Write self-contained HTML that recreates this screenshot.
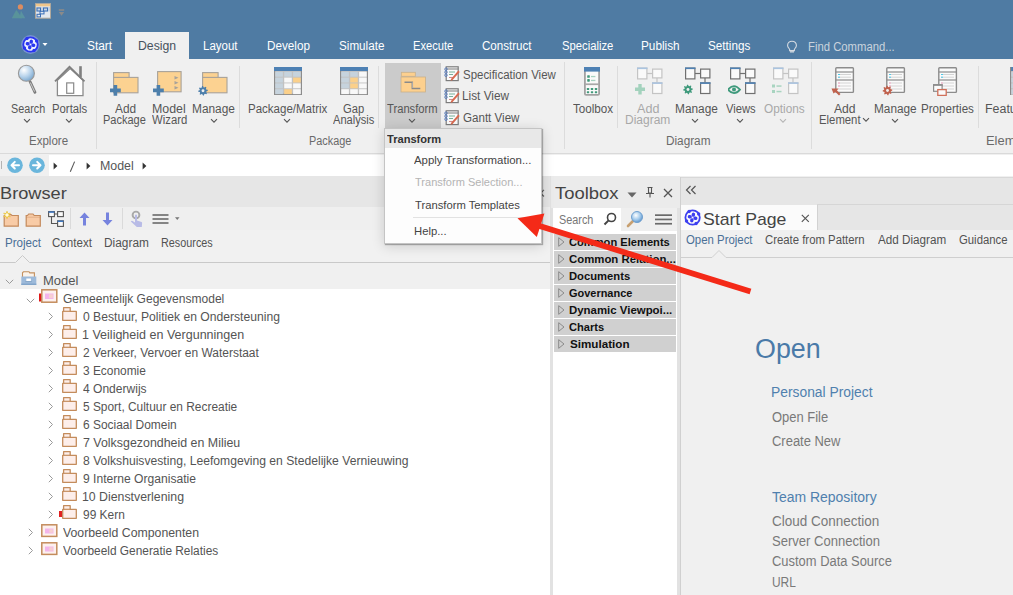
<!DOCTYPE html>
<html><head><meta charset="utf-8"><style>
html,body{margin:0;padding:0;}
body{width:1013px;height:595px;overflow:hidden;position:relative;background:#f0f0f0;font-family:"Liberation Sans",sans-serif;}
.t{position:absolute;white-space:nowrap;transform-origin:0 0;}
svg{display:block}
</style></head><body>
<div style="position:absolute;left:0px;top:0px;width:1013px;height:59px;background:#4f7ba3;"></div>
<svg style="position:absolute;left:11px;top:3px;" width="16" height="17" viewBox="0 0 16 17"><circle cx="9.4" cy="3.9" r="2.6" fill="#dc8c60"/><path d="M8.5 15.3 L9.8 8.4 Q10 7.9 10.4 8.4 L14.3 15.3 Z" fill="#5d9aa0" opacity="0.8"/><path d="M0.8 15.3 L4.9 7.6 Q5.3 7 5.8 7.6 L11.3 15.3 Z" fill="#5a9699" opacity="0.9"/></svg>
<svg style="position:absolute;left:35px;top:3px;" width="16" height="16" viewBox="0 0 16 16"><rect x="0.5" y="0.6" width="15" height="14.6" fill="#e2e8ef" stroke="#b0a89c" stroke-width="1"/><rect x="1" y="1" width="14" height="2.4" fill="#eec58a"/><rect x="1" y="4" width="14" height="4.5" fill="#c5d3e2"/><g fill="none" stroke="#3a6fb6" stroke-width="1"><rect x="2" y="5" width="3.5" height="3"/><rect x="8.5" y="5" width="4" height="3"/><rect x="5" y="8.3" width="4" height="2.6"/><rect x="2" y="11.3" width="3.5" height="2.6"/></g></svg>
<svg style="position:absolute;left:58px;top:8px;" width="7" height="9" viewBox="0 0 7 9"><rect x="0.8" y="1.2" width="5.4" height="1.6" fill="#8a8a8a"/><path d="M0.8 4 L6.2 4 L3.5 7.8 Z" fill="#8a8a8a"/></svg>
<svg style="position:absolute;left:21px;top:35px;" width="19" height="19" viewBox="0 0 19 19"><circle cx="9.5" cy="9.5" r="9.4" fill="#a0a8ff" opacity="0.5"/><circle cx="9.5" cy="9.5" r="7" fill="#eef0ff"/><circle cx="9.5" cy="9.5" r="7.2" fill="none" stroke="#2a36f0" stroke-width="1.8"/><circle cx="15.56" cy="6.00" r="1.7" fill="#2a36f0"/><circle cx="13.00" cy="15.56" r="1.7" fill="#2a36f0"/><circle cx="3.44" cy="13.00" r="1.7" fill="#2a36f0"/><circle cx="6.00" cy="3.44" r="1.7" fill="#2a36f0"/><ellipse cx="10.25" cy="6.70" rx="2.1" ry="1.75" transform="rotate(-75 10.25 6.70)" fill="#2a36f0"/><ellipse cx="12.30" cy="10.25" rx="2.1" ry="1.75" transform="rotate(15 12.30 10.25)" fill="#2a36f0"/><ellipse cx="8.75" cy="12.30" rx="2.1" ry="1.75" transform="rotate(105 8.75 12.30)" fill="#2a36f0"/><ellipse cx="6.70" cy="8.75" rx="2.1" ry="1.75" transform="rotate(195 6.70 8.75)" fill="#2a36f0"/></svg>
<svg style="position:absolute;left:42px;top:42px;" width="6" height="5" viewBox="0 0 6 5"><path d="M0.5 1 L5.5 1 L3 4 Z" fill="#ffffff"/></svg>
<div style="position:absolute;left:125px;top:32px;width:64px;height:28px;background:#f0f0f0;"></div>
<div class="t" style="left:86.5px;top:39.84px;font-size:12px;line-height:12px;color:#ffffff;transform:scaleX(0.9899);">Start</div>
<div class="t" style="left:138.0px;top:39.84px;font-size:12px;line-height:12px;color:#47525e;transform:scaleX(1.0210);">Design</div>
<div class="t" style="left:203.0px;top:39.84px;font-size:12px;line-height:12px;color:#ffffff;transform:scaleX(0.9571);">Layout</div>
<div class="t" style="left:267.0px;top:39.84px;font-size:12px;line-height:12px;color:#ffffff;transform:scaleX(0.9765);">Develop</div>
<div class="t" style="left:339.0px;top:39.84px;font-size:12px;line-height:12px;color:#ffffff;transform:scaleX(0.9727);">Simulate</div>
<div class="t" style="left:413.1px;top:39.84px;font-size:12px;line-height:12px;color:#ffffff;transform:scaleX(0.9286);">Execute</div>
<div class="t" style="left:482.0px;top:39.84px;font-size:12px;line-height:12px;color:#ffffff;transform:scaleX(0.9655);">Construct</div>
<div class="t" style="left:561.5px;top:39.84px;font-size:12px;line-height:12px;color:#ffffff;transform:scaleX(0.9395);">Specialize</div>
<div class="t" style="left:640.7px;top:39.84px;font-size:12px;line-height:12px;color:#ffffff;transform:scaleX(0.9801);">Publish</div>
<div class="t" style="left:708.0px;top:39.84px;font-size:12px;line-height:12px;color:#ffffff;transform:scaleX(0.9765);">Settings</div>
<svg style="position:absolute;left:786px;top:40px;" width="12" height="13" viewBox="0 0 12 13"><path d="M6 1.2 C3.3 1.2 1.6 3.2 1.6 5.4 C1.6 7.2 2.9 8.2 3.6 9.2 L3.6 10.6 L8.4 10.6 L8.4 9.2 C9.1 8.2 10.4 7.2 10.4 5.4 C10.4 3.2 8.7 1.2 6 1.2 Z" fill="none" stroke="#d5dbe2" stroke-width="1.1"/><rect x="4" y="11.2" width="4" height="1.3" fill="#d5dbe2"/></svg>
<div class="t" style="left:807.8px;top:40.84px;font-size:12px;line-height:12px;color:#c9d3dd;transform:scaleX(0.9422);">Find Command...</div>
<div style="position:absolute;left:0px;top:153px;width:1013px;height:1px;background:#dadada;"></div>
<div style="position:absolute;left:96px;top:62px;width:1px;height:87px;background:#dcdcdc;"></div>
<div style="position:absolute;left:239px;top:66px;width:1px;height:62px;background:#dcdcdc;"></div>
<div style="position:absolute;left:378px;top:66px;width:1px;height:62px;background:#dcdcdc;"></div>
<div style="position:absolute;left:564px;top:62px;width:1px;height:87px;background:#dcdcdc;"></div>
<div style="position:absolute;left:617px;top:66px;width:1px;height:62px;background:#dcdcdc;"></div>
<div style="position:absolute;left:811px;top:62px;width:1px;height:87px;background:#dcdcdc;"></div>
<div style="position:absolute;left:978px;top:66px;width:1px;height:62px;background:#dcdcdc;"></div>
<svg style="position:absolute;left:12px;top:63px;" width="28" height="34" viewBox="0 0 28 34"><defs><radialGradient id="lg" cx="0.35" cy="0.3" r="0.8"><stop offset="0" stop-color="#ffffff"/><stop offset="0.5" stop-color="#b9d4ec"/><stop offset="1" stop-color="#6f9fc9"/></radialGradient></defs>
<line x1="18" y1="18.5" x2="23" y2="29.3" stroke="#7a7a7a" stroke-width="2.8" stroke-linecap="round"/><line x1="18.3" y1="19.5" x2="22.6" y2="28.6" stroke="#d8d8d8" stroke-width="0.9"/>
<circle cx="14.4" cy="10.3" r="8" fill="url(#lg)" stroke="#999" stroke-width="1.1"/></svg>
<svg style="position:absolute;left:54px;top:65px;" width="33" height="33" viewBox="0 0 33 33"><rect x="25.2" y="1.2" width="2.6" height="11" fill="#7f7f7f"/><path d="M3.4 15.2 L3.4 30.6 L29 30.6 L29 15.2 L16.2 3.4 Z" fill="#ffffff" stroke="#8a8a8a" stroke-width="1.3"/><path d="M1 16.4 L15.5 1.8 L30.5 16.4" fill="none" stroke="#808080" stroke-width="1.8"/><rect x="12.7" y="17.9" width="7" height="10.4" fill="#ffffff" stroke="#8a8a8a" stroke-width="1.2"/></svg>
<div class="t" style="left:11.1px;top:102.84px;font-size:12px;line-height:12px;color:#565656;transform:scaleX(0.8980);">Search</div>
<div class="t" style="left:52.1px;top:102.84px;font-size:12px;line-height:12px;color:#565656;transform:scaleX(0.9444);">Portals</div>
<svg style="position:absolute;left:23px;top:118px;" width="8" height="6" viewBox="0 0 8 6"><path d="M1 1.2 L4 4.2 L7 1.2" fill="none" stroke="#555" stroke-width="1.1"/></svg>
<svg style="position:absolute;left:65px;top:118px;" width="8" height="6" viewBox="0 0 8 6"><path d="M1 1.2 L4 4.2 L7 1.2" fill="none" stroke="#555" stroke-width="1.1"/></svg>
<div class="t" style="left:29.3px;top:134.84px;font-size:12px;line-height:12px;color:#6a6a6a;transform:scaleX(0.9605);">Explore</div>
<svg style="position:absolute;left:113px;top:71.5px;" width="26" height="22" viewBox="0 0 26 22"><rect x="0.6" y="0.6" width="15.5" height="5" fill="#fcd291" stroke="#a8a29a" stroke-width="1.1"/><rect x="0.6" y="5.4" width="24.4" height="15.4" fill="#fcd291" stroke="#a8a29a" stroke-width="1.1"/></svg>
<svg style="position:absolute;left:110px;top:85px;" width="11" height="11" viewBox="0 0 11 11"><path d="M3.6 0 H7.2 V3.6 H10.8 V7.2 H7.2 V10.8 H3.6 V7.2 H0 V3.6 H3.6 Z" fill="#4d7fab"/></svg>
<svg style="position:absolute;left:157px;top:71px;" width="25" height="22" viewBox="0 0 25 22"><rect x="0.6" y="0.6" width="23.5" height="20.2" fill="#fcd291" stroke="#a8a29a" stroke-width="1.1"/><path d="M17.5 5 L21.5 6.8 L17.5 8.6 Z M17.5 10 L21.5 11.8 L17.5 13.6 Z M17.5 15 L21.5 16.8 L17.5 18.6 Z" fill="#a8a29a"/></svg>
<svg style="position:absolute;left:153px;top:85px;" width="11" height="11" viewBox="0 0 11 11"><path d="M3.6 0 H7.2 V3.6 H10.8 V7.2 H7.2 V10.8 H3.6 V7.2 H0 V3.6 H3.6 Z" fill="#4d7fab"/></svg>
<svg style="position:absolute;left:202px;top:71.5px;" width="26" height="22" viewBox="0 0 26 22"><rect x="0.6" y="0.6" width="15.5" height="5" fill="#fcd291" stroke="#a8a29a" stroke-width="1.1"/><rect x="0.6" y="5.4" width="24.4" height="15.4" fill="#fcd291" stroke="#a8a29a" stroke-width="1.1"/></svg>
<svg style="position:absolute;left:198px;top:85px;" width="11" height="11" viewBox="0 0 11 11"><polygon points="9.71,4.86 9.80,5.80 8.39,6.47 8.19,7.12 8.99,8.47 8.39,9.19 6.92,8.67 6.32,8.99 5.94,10.51 5.00,10.60 4.33,9.19 3.68,8.99 2.33,9.79 1.61,9.19 2.13,7.72 1.81,7.12 0.29,6.74 0.20,5.80 1.61,5.13 1.81,4.48 1.01,3.13 1.61,2.41 3.08,2.93 3.68,2.61 4.06,1.09 5.00,1.00 5.67,2.41 6.32,2.61 7.67,1.81 8.39,2.41 7.87,3.88 8.19,4.48" fill="#4d7fab"/><circle cx="5" cy="5.8" r="2.98" fill="#4d7fab"/><circle cx="5" cy="5.8" r="1.44" fill="#f0f0f0"/></svg>
<div class="t" style="left:114.5px;top:102.84px;font-size:12px;line-height:12px;color:#565656;transform:scaleX(0.9880);">Add</div>
<div class="t" style="left:103.4px;top:114.34px;font-size:12px;line-height:12px;color:#565656;transform:scaleX(0.9171);">Package</div>
<div class="t" style="left:152.3px;top:102.84px;font-size:12px;line-height:12px;color:#565656;transform:scaleX(1.0323);">Model</div>
<div class="t" style="left:151.7px;top:114.34px;font-size:12px;line-height:12px;color:#565656;transform:scaleX(0.9442);">Wizard</div>
<div class="t" style="left:192.2px;top:102.84px;font-size:12px;line-height:12px;color:#565656;transform:scaleX(0.9905);">Manage</div>
<svg style="position:absolute;left:210px;top:118px;" width="8" height="6" viewBox="0 0 8 6"><path d="M1 1.2 L4 4.2 L7 1.2" fill="none" stroke="#555" stroke-width="1.1"/></svg>
<svg style="position:absolute;left:274px;top:67.3px;" width="28" height="28" viewBox="0 0 28 28"><rect x="0" y="0" width="28" height="28" fill="#c2c2c2"/><rect x="0.6" y="0.6" width="26.8" height="26.8" fill="none" stroke="#8c8c8c" stroke-width="1.2"/><rect x="0" y="0" width="28" height="4" fill="#4e81b4"/><rect x="1.3" y="4.8" width="7.6" height="4.9" fill="#c6d3dd"/><rect x="10.2" y="4.8" width="7.6" height="4.9" fill="#c6d3dd"/><rect x="19.1" y="4.8" width="7.6" height="4.9" fill="#c6d3dd"/><rect x="1.3" y="10.6" width="7.6" height="4.9" fill="#c6d3dd"/><rect x="10.2" y="10.6" width="7.6" height="4.9" fill="#f8f8f8"/><rect x="19.1" y="10.6" width="7.6" height="4.9" fill="#fbd08a"/><rect x="1.3" y="16.4" width="7.6" height="4.9" fill="#c6d3dd"/><rect x="10.2" y="16.4" width="7.6" height="4.9" fill="#f8f8f8"/><rect x="19.1" y="16.4" width="7.6" height="4.9" fill="#f8f8f8"/><rect x="1.3" y="22.2" width="7.6" height="4.9" fill="#c6d3dd"/><rect x="10.2" y="22.2" width="7.6" height="4.9" fill="#fbd08a"/><rect x="19.1" y="22.2" width="7.6" height="4.9" fill="#f8f8f8"/></svg>
<svg style="position:absolute;left:339.5px;top:67.3px;" width="28" height="28" viewBox="0 0 28 28"><rect x="0" y="0" width="28" height="28" fill="#c2c2c2"/><rect x="0.6" y="0.6" width="26.8" height="26.8" fill="none" stroke="#8c8c8c" stroke-width="1.2"/><rect x="0" y="0" width="28" height="4" fill="#4e81b4"/><rect x="1.3" y="4.8" width="7.6" height="4.9" fill="#c6d3dd"/><rect x="10.2" y="4.8" width="7.6" height="4.9" fill="#c6d3dd"/><rect x="19.1" y="4.8" width="7.6" height="4.9" fill="#f8f8f8"/><rect x="1.3" y="10.6" width="7.6" height="4.9" fill="#c6d3dd"/><rect x="10.2" y="10.6" width="7.6" height="4.9" fill="#fbd08a"/><rect x="19.1" y="10.6" width="7.6" height="4.9" fill="#f8f8f8"/><rect x="1.3" y="16.4" width="7.6" height="4.9" fill="#c6d3dd"/><rect x="10.2" y="16.4" width="7.6" height="4.9" fill="#fbd08a"/><rect x="19.1" y="16.4" width="7.6" height="4.9" fill="#f8f8f8"/><rect x="1.3" y="22.2" width="7.6" height="4.9" fill="#f8f8f8"/><rect x="10.2" y="22.2" width="7.6" height="4.9" fill="#f8f8f8"/><rect x="19.1" y="22.2" width="7.6" height="4.9" fill="#f8f8f8"/></svg>
<div class="t" style="left:247.8px;top:102.84px;font-size:12px;line-height:12px;color:#565656;transform:scaleX(0.9595);">Package/Matrix</div>
<svg style="position:absolute;left:283px;top:118px;" width="8" height="6" viewBox="0 0 8 6"><path d="M1 1.2 L4 4.2 L7 1.2" fill="none" stroke="#555" stroke-width="1.1"/></svg>
<div class="t" style="left:343.0px;top:102.84px;font-size:12px;line-height:12px;color:#565656;transform:scaleX(0.9333);">Gap</div>
<div class="t" style="left:333.0px;top:114.34px;font-size:12px;line-height:12px;color:#565656;transform:scaleX(0.9266);">Analysis</div>
<div class="t" style="left:309.1px;top:134.84px;font-size:12px;line-height:12px;color:#6a6a6a;transform:scaleX(0.9061);">Package</div>
<div style="position:absolute;left:385px;top:63px;width:56px;height:65px;background:#cbcbcb;"></div>
<svg style="position:absolute;left:400px;top:71px;" width="27" height="22" viewBox="0 0 27 22"><rect x="1.3" y="1.3" width="14" height="4" fill="#fdd08e" stroke="#c8b08a" stroke-width="0.8"/><rect x="1" y="6" width="24.5" height="15" fill="#fdd08e" stroke="#c8b08a" stroke-width="0.8"/><path d="M4.5 11.3 H12.3 V17.6 H20.3" fill="none" stroke="#8a8a8a" stroke-width="1.5"/><path d="M12.3 11.3 V17" stroke="#ffffff" stroke-width="0.6" opacity="0.6"/></svg>
<div class="t" style="left:387.3px;top:102.84px;font-size:12px;line-height:12px;color:#565656;transform:scaleX(0.9333);">Transform</div>
<svg style="position:absolute;left:408px;top:118px;" width="8" height="6" viewBox="0 0 8 6"><path d="M1 1.2 L4 4.2 L7 1.2" fill="none" stroke="#555" stroke-width="1.1"/></svg>
<svg style="position:absolute;left:444px;top:66px;" width="17" height="16" viewBox="0 0 17 16"><rect x="2.2" y="0.8" width="12" height="13.8" fill="#fafafa" stroke="#7c7c7c" stroke-width="1.2"/><line x1="2.2" y1="3" x2="14.2" y2="3" stroke="#7c7c7c" stroke-width="1"/><g stroke="#6aa890" stroke-width="0.9"><line x1="5" y1="6" x2="11" y2="6"/><line x1="5" y1="8.5" x2="9" y2="8.5"/></g><line x1="5" y1="11.5" x2="9" y2="11.5" stroke="#d08080" stroke-width="0.9"/><g fill="none" stroke="#5a7fc0" stroke-width="0.9"><circle cx="2" cy="3.2" r="1.3"/><circle cx="2" cy="6.2" r="1.3"/><circle cx="2" cy="9.2" r="1.3"/></g><path d="M7 13 L14.3 4.6 L15.7 5.9 L8.4 14.3 L6.6 14.8 Z" fill="#d86a50"/></svg>
<svg style="position:absolute;left:444px;top:88px;" width="17" height="16" viewBox="0 0 17 16"><rect x="2.2" y="0.8" width="12" height="13.8" fill="#fafafa" stroke="#7c7c7c" stroke-width="1.2"/><line x1="2.2" y1="3" x2="14.2" y2="3" stroke="#7c7c7c" stroke-width="1"/><g stroke="#6aa890" stroke-width="0.9"><line x1="5" y1="6" x2="11" y2="6"/><line x1="5" y1="8.5" x2="9" y2="8.5"/></g><line x1="5" y1="11.5" x2="9" y2="11.5" stroke="#d08080" stroke-width="0.9"/><g fill="none" stroke="#5a7fc0" stroke-width="0.9"><circle cx="2" cy="3.2" r="1.3"/><circle cx="2" cy="6.2" r="1.3"/><circle cx="2" cy="9.2" r="1.3"/></g><path d="M7 13 L14.3 4.6 L15.7 5.9 L8.4 14.3 L6.6 14.8 Z" fill="#d86a50"/></svg>
<svg style="position:absolute;left:444px;top:110px;" width="17" height="16" viewBox="0 0 17 16"><rect x="2.2" y="0.8" width="12" height="13.8" fill="#fafafa" stroke="#7c7c7c" stroke-width="1.2"/><line x1="2.2" y1="3" x2="14.2" y2="3" stroke="#7c7c7c" stroke-width="1"/><g stroke="#6aa890" stroke-width="0.9"><line x1="5" y1="6" x2="11" y2="6"/><line x1="5" y1="8.5" x2="9" y2="8.5"/></g><line x1="5" y1="11.5" x2="9" y2="11.5" stroke="#d08080" stroke-width="0.9"/><g fill="none" stroke="#5a7fc0" stroke-width="0.9"><circle cx="2" cy="3.2" r="1.3"/><circle cx="2" cy="6.2" r="1.3"/><circle cx="2" cy="9.2" r="1.3"/></g><path d="M7 13 L14.3 4.6 L15.7 5.9 L8.4 14.3 L6.6 14.8 Z" fill="#d86a50"/></svg>
<div class="t" style="left:462.5px;top:68.84px;font-size:12px;line-height:12px;color:#565656;transform:scaleX(0.9550);">Specification View</div>
<div class="t" style="left:462.0px;top:90.34px;font-size:12px;line-height:12px;color:#565656;transform:scaleX(0.9840);">List View</div>
<div class="t" style="left:462.5px;top:112.14px;font-size:12px;line-height:12px;color:#565656;transform:scaleX(0.9655);">Gantt View</div>
<svg style="position:absolute;left:583.8px;top:67px;" width="16" height="29" viewBox="0 0 16 29"><rect x="0.9" y="0.9" width="14.2" height="27" rx="1.2" fill="#fafafa" stroke="#a2a2a2" stroke-width="1.8"/><rect x="0" y="0" width="16" height="4.6" fill="#4e81b4"/><rect x="0.9" y="16.4" width="14.2" height="1.7" fill="#a8a8a8"/><g fill="#40997a"><rect x="3.2" y="8.2" width="2.6" height="2.6" rx="0.6"/><rect x="3.2" y="12.1" width="2.6" height="2.6" rx="0.6"/><rect x="2.8" y="21" width="2.4" height="2" rx="0.6"/><rect x="6.8" y="21" width="2.4" height="2" rx="0.6"/><rect x="10.8" y="21" width="2.4" height="2" rx="0.6"/><rect x="2.8" y="24.2" width="2.4" height="2" rx="0.6"/><rect x="6.8" y="24.2" width="2.4" height="2" rx="0.6"/><rect x="10.8" y="24.2" width="2.4" height="2" rx="0.6"/></g><g fill="#a6d2c0"><rect x="7" y="8.9" width="4.4" height="1.3"/><rect x="7" y="12.8" width="4.4" height="1.3"/></g></svg>
<div class="t" style="left:572.6px;top:102.84px;font-size:12px;line-height:12px;color:#565656;transform:scaleX(0.9707);">Toolbox</div>
<svg style="position:absolute;left:635px;top:67px;" width="29" height="28" viewBox="0 0 29 28"><line x1="12" y1="6.5" x2="17" y2="6.5" stroke="#c4c4c4" stroke-width="1.2"/><line x1="22" y1="11" x2="22" y2="15.5" stroke="#c4c4c4" stroke-width="1.2"/><rect x="2.6" y="1.1" width="9.3" height="10.8" fill="#fafafa" stroke="#c4c4c4" stroke-width="1.2"/><rect x="2" y="0.5" width="10.5" height="1.6" fill="#aac4e0"/><rect x="17.6" y="2.1" width="9.3" height="8.8" fill="#fafafa" stroke="#c4c4c4" stroke-width="1.2"/><rect x="17.6" y="15.9" width="9.3" height="10.6" fill="#fafafa" stroke="#c4c4c4" stroke-width="1.2"/><rect x="17" y="15.3" width="10.5" height="1.6" fill="#aac4e0"/><path d="M3.3 17 H6.7 V20.5 H10 V23.9 H6.7 V27.4 H3.3 V23.9 H0 V20.5 H3.3 Z" fill="#a3d2bd"/></svg>
<svg style="position:absolute;left:683px;top:67px;" width="29" height="28" viewBox="0 0 29 28"><line x1="12" y1="6.5" x2="17" y2="6.5" stroke="#707070" stroke-width="1.2"/><line x1="22" y1="11" x2="22" y2="15.5" stroke="#707070" stroke-width="1.2"/><rect x="2.6" y="1.1" width="9.3" height="10.8" fill="#fafafa" stroke="#707070" stroke-width="1.2"/><rect x="2" y="0.5" width="10.5" height="1.6" fill="#4e81b4"/><rect x="17.6" y="2.1" width="9.3" height="8.8" fill="#fafafa" stroke="#707070" stroke-width="1.2"/><rect x="17.6" y="15.9" width="9.3" height="10.6" fill="#fafafa" stroke="#707070" stroke-width="1.2"/><rect x="17" y="15.3" width="10.5" height="1.6" fill="#4e81b4"/><polygon points="9.71,21.56 9.80,22.50 8.39,23.17 8.19,23.82 8.99,25.17 8.39,25.89 6.92,25.37 6.32,25.69 5.94,27.21 5.00,27.30 4.33,25.89 3.68,25.69 2.33,26.49 1.61,25.89 2.13,24.42 1.81,23.82 0.29,23.44 0.20,22.50 1.61,21.83 1.81,21.18 1.01,19.83 1.61,19.11 3.08,19.63 3.68,19.31 4.06,17.79 5.00,17.70 5.67,19.11 6.32,19.31 7.67,18.51 8.39,19.11 7.87,20.58 8.19,21.18" fill="#3f9a7c"/><circle cx="5" cy="22.5" r="2.98" fill="#3f9a7c"/><circle cx="5" cy="22.5" r="1.44" fill="#f0f0f0"/></svg>
<svg style="position:absolute;left:727.6px;top:67px;" width="29" height="28" viewBox="0 0 29 28"><line x1="12" y1="6.5" x2="17" y2="6.5" stroke="#707070" stroke-width="1.2"/><line x1="22" y1="11" x2="22" y2="15.5" stroke="#707070" stroke-width="1.2"/><rect x="2.6" y="1.1" width="9.3" height="10.8" fill="#fafafa" stroke="#707070" stroke-width="1.2"/><rect x="2" y="0.5" width="10.5" height="1.6" fill="#4e81b4"/><rect x="17.6" y="2.1" width="9.3" height="8.8" fill="#fafafa" stroke="#707070" stroke-width="1.2"/><rect x="17.6" y="15.9" width="9.3" height="10.6" fill="#fafafa" stroke="#707070" stroke-width="1.2"/><rect x="17" y="15.3" width="10.5" height="1.6" fill="#4e81b4"/><path d="M0 22.6 Q6 15.5 12 22.6 Q6 29.7 0 22.6 Z" fill="none" stroke="#3f9a7c" stroke-width="1.7"/><circle cx="6" cy="22.6" r="2" fill="#3f9a7c"/></svg>
<svg style="position:absolute;left:770.5px;top:67px;" width="29" height="28" viewBox="0 0 29 28"><line x1="12" y1="6.5" x2="17" y2="6.5" stroke="#c4c4c4" stroke-width="1.2"/><line x1="22" y1="11" x2="22" y2="15.5" stroke="#c4c4c4" stroke-width="1.2"/><rect x="2.6" y="1.1" width="9.3" height="10.8" fill="#fafafa" stroke="#c4c4c4" stroke-width="1.2"/><rect x="2" y="0.5" width="10.5" height="1.6" fill="#aac4e0"/><rect x="17.6" y="2.1" width="9.3" height="8.8" fill="#fafafa" stroke="#c4c4c4" stroke-width="1.2"/><rect x="17.6" y="15.9" width="9.3" height="10.6" fill="#fafafa" stroke="#c4c4c4" stroke-width="1.2"/><rect x="17" y="15.3" width="10.5" height="1.6" fill="#aac4e0"/><g fill="#a8d4c0"><rect x="1" y="17.5" width="3" height="3"/><rect x="5.5" y="18.3" width="5" height="1.5"/><rect x="1" y="23" width="3" height="3"/><rect x="5.5" y="23.8" width="5" height="1.5"/></g></svg>
<div class="t" style="left:637.0px;top:102.84px;font-size:12px;line-height:12px;color:#a8a8a8;transform:scaleX(1.0506);">Add</div>
<div class="t" style="left:625.2px;top:114.34px;font-size:12px;line-height:12px;color:#a8a8a8;transform:scaleX(0.9989);">Diagram</div>
<div class="t" style="left:674.5px;top:102.84px;font-size:12px;line-height:12px;color:#565656;transform:scaleX(0.9881);">Manage</div>
<svg style="position:absolute;left:691px;top:118px;" width="8" height="6" viewBox="0 0 8 6"><path d="M1 1.2 L4 4.2 L7 1.2" fill="none" stroke="#555" stroke-width="1.1"/></svg>
<div class="t" style="left:725.6px;top:102.84px;font-size:12px;line-height:12px;color:#565656;transform:scaleX(0.9333);">Views</div>
<svg style="position:absolute;left:736px;top:118px;" width="8" height="6" viewBox="0 0 8 6"><path d="M1 1.2 L4 4.2 L7 1.2" fill="none" stroke="#555" stroke-width="1.1"/></svg>
<div class="t" style="left:763.5px;top:102.84px;font-size:12px;line-height:12px;color:#a8a8a8;transform:scaleX(0.9827);">Options</div>
<svg style="position:absolute;left:779px;top:118px;" width="8" height="6" viewBox="0 0 8 6"><path d="M1 1.2 L4 4.2 L7 1.2" fill="none" stroke="#b5b5b5" stroke-width="1.1"/></svg>
<div class="t" style="left:665.5px;top:134.84px;font-size:12px;line-height:12px;color:#6a6a6a;transform:scaleX(0.9806);">Diagram</div>
<svg style="position:absolute;left:830px;top:67px;" width="26" height="29" viewBox="0 0 26 29"><rect x="5.8" y="0.8" width="17.6" height="24.6" rx="0.8" fill="#fafafa" stroke="#8c8c8c" stroke-width="1.4"/><line x1="5.8" y1="5" x2="23.4" y2="5" stroke="#8c8c8c" stroke-width="1.2"/><line x1="5.8" y1="13" x2="23.4" y2="13" stroke="#8c8c8c" stroke-width="1.2"/><g stroke="#d4d4d4" stroke-width="1"><line x1="8" y1="7.5" x2="21" y2="7.5"/><line x1="8" y1="10.2" x2="21" y2="10.2"/><line x1="8" y1="16" x2="21" y2="16"/><line x1="8" y1="19" x2="21" y2="19"/><line x1="8" y1="22" x2="21" y2="22"/></g><rect x="8" y="7" width="2" height="1" fill="#50c8e8"/><rect x="8" y="9.7" width="2" height="1" fill="#50c8e8"/><rect x="8" y="15.5" width="2" height="1" fill="#f4a8c8"/><rect x="8" y="18.5" width="2" height="1" fill="#f4a8c8"/><path d="M1.5 21.5 L8.5 21.5 L7 23.5 L10.5 27 L9 28.5 L5.5 25 L3.5 26.5 Z" fill="#c0624e"/></svg>
<svg style="position:absolute;left:881px;top:67px;" width="26" height="29" viewBox="0 0 26 29"><rect x="5.8" y="0.8" width="17.6" height="24.6" rx="0.8" fill="#fafafa" stroke="#8c8c8c" stroke-width="1.4"/><line x1="5.8" y1="5" x2="23.4" y2="5" stroke="#8c8c8c" stroke-width="1.2"/><line x1="5.8" y1="13" x2="23.4" y2="13" stroke="#8c8c8c" stroke-width="1.2"/><g stroke="#d4d4d4" stroke-width="1"><line x1="8" y1="7.5" x2="21" y2="7.5"/><line x1="8" y1="10.2" x2="21" y2="10.2"/><line x1="8" y1="16" x2="21" y2="16"/><line x1="8" y1="19" x2="21" y2="19"/><line x1="8" y1="22" x2="21" y2="22"/></g><rect x="8" y="7" width="2" height="1" fill="#50c8e8"/><rect x="8" y="9.7" width="2" height="1" fill="#50c8e8"/><rect x="8" y="15.5" width="2" height="1" fill="#f4a8c8"/><rect x="8" y="18.5" width="2" height="1" fill="#f4a8c8"/><polygon points="11.21,22.56 11.30,23.50 9.89,24.17 9.69,24.82 10.49,26.17 9.89,26.89 8.42,26.37 7.82,26.69 7.44,28.21 6.50,28.30 5.83,26.89 5.18,26.69 3.83,27.49 3.11,26.89 3.63,25.42 3.31,24.82 1.79,24.44 1.70,23.50 3.11,22.83 3.31,22.18 2.51,20.83 3.11,20.11 4.58,20.63 5.18,20.31 5.56,18.79 6.50,18.70 7.17,20.11 7.82,20.31 9.17,19.51 9.89,20.11 9.37,21.58 9.69,22.18" fill="#c0624e"/><circle cx="6.5" cy="23.5" r="2.98" fill="#c0624e"/><circle cx="6.5" cy="23.5" r="1.44" fill="#f0f0f0"/></svg>
<svg style="position:absolute;left:933px;top:67px;" width="26" height="29" viewBox="0 0 26 29"><rect x="5.8" y="0.8" width="17.6" height="24.6" rx="0.8" fill="#fafafa" stroke="#8c8c8c" stroke-width="1.4"/><line x1="5.8" y1="5" x2="23.4" y2="5" stroke="#8c8c8c" stroke-width="1.2"/><line x1="5.8" y1="13" x2="23.4" y2="13" stroke="#8c8c8c" stroke-width="1.2"/><g stroke="#d4d4d4" stroke-width="1"><line x1="8" y1="7.5" x2="21" y2="7.5"/><line x1="8" y1="10.2" x2="21" y2="10.2"/><line x1="8" y1="16" x2="21" y2="16"/><line x1="8" y1="19" x2="21" y2="19"/><line x1="8" y1="22" x2="21" y2="22"/></g><rect x="8" y="7" width="2" height="1" fill="#50c8e8"/><rect x="8" y="9.7" width="2" height="1" fill="#50c8e8"/><rect x="8" y="15.5" width="2" height="1" fill="#f4a8c8"/><rect x="8" y="18.5" width="2" height="1" fill="#f4a8c8"/><rect x="0.6" y="17.8" width="8.5" height="6.5" fill="#fafafa" stroke="#8c8c8c" stroke-width="1.2"/><rect x="0" y="17.2" width="9.7" height="1.6" fill="#8c8c8c"/><rect x="4.8" y="22.6" width="8.4" height="5.8" fill="#fafafa" stroke="#d0705a" stroke-width="1.3"/></svg>
<div class="t" style="left:833.6px;top:102.84px;font-size:12px;line-height:12px;color:#565656;transform:scaleX(1.0120);">Add</div>
<div class="t" style="left:818.5px;top:114.34px;font-size:12px;line-height:12px;color:#565656;transform:scaleX(0.9442);">Element</div>
<svg style="position:absolute;left:862px;top:117px;" width="8" height="6" viewBox="0 0 8 6"><path d="M1 1.2 L4 4.2 L7 1.2" fill="none" stroke="#555" stroke-width="1.1"/></svg>
<div class="t" style="left:873.5px;top:102.84px;font-size:12px;line-height:12px;color:#565656;transform:scaleX(0.9833);">Manage</div>
<svg style="position:absolute;left:890.5px;top:118px;" width="8" height="6" viewBox="0 0 8 6"><path d="M1 1.2 L4 4.2 L7 1.2" fill="none" stroke="#555" stroke-width="1.1"/></svg>
<div class="t" style="left:920.8px;top:102.84px;font-size:12px;line-height:12px;color:#565656;transform:scaleX(0.9671);">Properties</div>
<div class="t" style="left:985.3px;top:102.84px;font-size:12px;line-height:12px;color:#565656;transform:scaleX(1.0345);">Featu</div>
<svg style="position:absolute;left:1009.5px;top:67.2px;" width="4" height="28" viewBox="0 0 4 28"><rect x="0" y="0" width="4" height="28" fill="#c2c2c2"/><rect x="0" y="0" width="4" height="4" fill="#4e81b4"/><rect x="0" y="0" width="1.2" height="28" fill="#8c8c8c"/><g fill="#c6d3dd"><rect x="1.3" y="4.8" width="3" height="4.9"/><rect x="1.3" y="10.6" width="3" height="4.9"/><rect x="1.3" y="16.4" width="3" height="4.9"/><rect x="1.3" y="22.2" width="3" height="4.9"/></g></svg>
<div class="t" style="left:985.6px;top:134.84px;font-size:12px;line-height:12px;color:#6a6a6a;transform:scaleX(1.0769);">Eleme</div>
<div style="position:absolute;left:0px;top:154px;width:1013px;height:22px;background:#f0f0f0;"></div>
<div style="position:absolute;left:49px;top:155px;width:964px;height:21px;background:#ffffff;"></div>
<div style="position:absolute;left:1px;top:161px;width:1px;height:8px;background:#b4b4b4;"></div>
<svg style="position:absolute;left:6.5px;top:157px;" width="16" height="17" viewBox="0 0 16 17"><circle cx="8" cy="8.2" r="7.8" fill="#6ab6dc"/><path d="M12 8.2 H4.5 M7.8 4.9 L4.5 8.2 L7.8 11.5" fill="none" stroke="#ffffff" stroke-width="2" stroke-linejoin="round" stroke-linecap="round"/></svg>
<svg style="position:absolute;left:28.5px;top:157px;" width="16" height="17" viewBox="0 0 16 17"><circle cx="8" cy="8.2" r="7.8" fill="#6ab6dc"/><path d="M4 8.2 H11.5 M8.2 4.9 L11.5 8.2 L8.2 11.5" fill="none" stroke="#ffffff" stroke-width="2" stroke-linejoin="round" stroke-linecap="round"/></svg>
<svg style="position:absolute;left:53px;top:161.5px;" width="5" height="8" viewBox="0 0 5 8"><path d="M0.6 0.6 L4.4 4 L0.6 7.4 Z" fill="#333"/></svg>
<svg style="position:absolute;left:86px;top:161.5px;" width="5" height="8" viewBox="0 0 5 8"><path d="M0.6 0.6 L4.4 4 L0.6 7.4 Z" fill="#333"/></svg>
<svg style="position:absolute;left:142px;top:161.5px;" width="5" height="8" viewBox="0 0 5 8"><path d="M0.6 0.6 L4.4 4 L0.6 7.4 Z" fill="#333"/></svg>
<svg style="position:absolute;left:69px;top:161px;" width="7" height="12" viewBox="0 0 7 12"><line x1="5.6" y1="0.6" x2="1.3" y2="10.8" stroke="#555" stroke-width="1.05"/></svg>
<div class="t" style="left:99.7px;top:159.84px;font-size:12px;line-height:12px;color:#565656;transform:scaleX(1.0323);">Model</div>
<div style="position:absolute;left:0px;top:176px;width:550px;height:31px;background:#e6e6e6;"></div>
<div class="t" style="left:0.3px;top:184.61px;font-size:17px;line-height:17px;color:#444444;transform:scaleX(1.0700);">Browser</div>
<div style="position:absolute;left:0px;top:207px;width:550px;height:56px;background:#f1f1f1;"></div>
<div style="position:absolute;left:0px;top:207px;width:550px;height:23px;background:#efefef;"></div>
<svg style="position:absolute;left:3px;top:211px;" width="17" height="16" viewBox="0 0 17 16"><path d="M1.2 15.2 V4.5 H3 L4.2 3.6 H8 L9 4.5 H15.3 V15.2 Z" fill="#f8cba6" stroke="#c48a5c" stroke-width="1.2"/><path d="M4 0.3 L4.9 2.6 L7.3 2.2 L5.6 4 L7.3 5.8 L4.9 5.4 L4 7.7 L3.1 5.4 L0.7 5.8 L2.4 4 L0.7 2.2 L3.1 2.6 Z" fill="#fffbe0" stroke="#e8c030" stroke-width="0.8"/></svg>
<svg style="position:absolute;left:25px;top:211px;" width="17" height="16" viewBox="0 0 17 16"><path d="M1.2 15.2 V4.5 H2.5 L3.7 3 H8 L9.2 4.5 H15.3 V15.2 Z" fill="#f8cba6" stroke="#c48a5c" stroke-width="1.2"/><line x1="1.2" y1="6.2" x2="15.3" y2="6.2" stroke="#c48a5c" stroke-width="0.8" opacity="0.5"/></svg>
<svg style="position:absolute;left:48px;top:211px;" width="16" height="16" viewBox="0 0 16 16"><path d="M3.5 5.5 V12.5 H9.5 M6.5 3 H9.5" fill="none" stroke="#555" stroke-width="1.1"/><g fill="#fafafa" stroke="#555" stroke-width="1.1"><rect x="0.6" y="0.6" width="5.8" height="5"/><rect x="9.6" y="0.6" width="5.8" height="5"/><rect x="9.6" y="9.8" width="5.8" height="5.6"/></g><rect x="0.6" y="0.3" width="5.8" height="1.5" fill="#3d76c0"/><rect x="9.6" y="9.5" width="5.8" height="1.5" fill="#3d76c0"/></svg>
<div style="position:absolute;left:70px;top:208px;width:1px;height:21px;background:#dadada;"></div>
<svg style="position:absolute;left:79px;top:212px;" width="11" height="14" viewBox="0 0 11 14"><path d="M5.5 0.5 L10.5 6 L7 6 L7 13.5 L4 13.5 L4 6 L0.5 6 Z" fill="#7683de"/></svg>
<svg style="position:absolute;left:102px;top:212px;" width="11" height="14" viewBox="0 0 11 14"><path d="M5.5 13.5 L10.5 8 L7 8 L7 0.5 L4 0.5 L4 8 L0.5 8 Z" fill="#7683de"/></svg>
<div style="position:absolute;left:122px;top:208px;width:1px;height:21px;background:#dadada;"></div>
<svg style="position:absolute;left:130px;top:210px;" width="13" height="18" viewBox="0 0 13 18"><circle cx="6" cy="5" r="3.4" fill="none" stroke="#a8a8a8" stroke-width="1.9"/><path d="M5 5 Q6 4.2 7 5 V10.5 L11.6 12 Q12.2 12.3 12.1 13 L11.8 17 H6.8 L0.8 11.4 Q1.6 10.6 2.6 11 L5 12.4 Z" fill="#b8bbe6"/></svg>
<svg style="position:absolute;left:152px;top:214px;" width="28" height="10" viewBox="0 0 28 10"><g fill="#6a6a6a"><rect x="0.5" y="0.2" width="16" height="1.6"/><rect x="0.5" y="4.2" width="16" height="1.6"/><rect x="0.5" y="8.2" width="16" height="1.6"/></g><path d="M23 3.2 L27.5 3.2 L25.25 6 Z" fill="#777"/></svg>
<div class="t" style="left:4.5px;top:236.84px;font-size:12px;line-height:12px;color:#4a6f96;transform:scaleX(0.9655);">Project</div>
<div class="t" style="left:52.4px;top:236.84px;font-size:12px;line-height:12px;color:#525252;transform:scaleX(0.9644);">Context</div>
<div class="t" style="left:104.2px;top:236.84px;font-size:12px;line-height:12px;color:#525252;transform:scaleX(0.9897);">Diagram</div>
<div class="t" style="left:161.0px;top:236.84px;font-size:12px;line-height:12px;color:#525252;transform:scaleX(0.9018);">Resources</div>
<svg style="position:absolute;left:0px;top:253px;" width="550" height="11" viewBox="0 0 550 11"><path d="M0 9.5 H15.5 L22.5 2.5 L29.5 9.5 H550" fill="none" stroke="#c9c9c9" stroke-width="1"/></svg>
<div style="position:absolute;left:0px;top:263px;width:550px;height:26px;background:#f0f0f0;"></div>
<div style="position:absolute;left:0px;top:289px;width:550px;height:306px;background:#ffffff;"></div>
<svg style="position:absolute;left:5px;top:279px;" width="9" height="6" viewBox="0 0 9 6"><path d="M0.8 0.8 L4.5 4.5 L8.2 0.8" fill="none" stroke="#9a9a9a" stroke-width="1"/></svg>
<svg style="position:absolute;left:21px;top:270px;" width="16" height="16" viewBox="0 0 16 16"><path d="M1.5 7 V2.8 L2.4 1.8 H8 L8.8 2.9 H13.4 V7" fill="#fbf3ea" stroke="#c4905e" stroke-width="1.1"/><rect x="0.3" y="6.5" width="15" height="8.4" fill="#9dbada"/><rect x="0.3" y="13.6" width="15" height="1.3" fill="#7fa2c8"/><rect x="5.3" y="8.5" width="4.6" height="2.6" fill="#ffffff"/><rect x="4.3" y="11.1" width="6.6" height="1" fill="#86a6c8"/></svg>
<div class="t" style="left:43.2px;top:274.84px;font-size:12px;line-height:12px;color:#545454;transform:scaleX(1.0806);">Model</div>
<svg style="position:absolute;left:25.5px;top:298px;" width="9" height="6" viewBox="0 0 9 6"><path d="M0.8 0.8 L4.5 4.5 L8.2 0.8" fill="none" stroke="#9a9a9a" stroke-width="1"/></svg>
<svg style="position:absolute;left:38px;top:289px;" width="20" height="15" viewBox="0 0 20 15"><rect x="1" y="4.5" width="4" height="8" fill="#e01818"/><rect x="3.8" y="0.8" width="15" height="12.4" fill="#fdf0ee" stroke="#c48c5c" stroke-width="1.5"/><rect x="7" y="4.5" width="8.5" height="5.5" fill="#f3b5ea"/><rect x="11" y="5.3" width="3.8" height="3.8" fill="#f7d0d0"/></svg>
<div class="t" style="left:62.5px;top:292.84px;font-size:12px;line-height:12px;color:#545454;transform:scaleX(1.0031);">Gemeentelijk Gegevensmodel</div>
<svg style="position:absolute;left:47.5px;top:311.7px;" width="6" height="9" viewBox="0 0 6 9"><path d="M0.8 0.8 L4.5 4.5 L0.8 8.2" fill="none" stroke="#9a9a9a" stroke-width="1"/></svg>
<svg style="position:absolute;left:62px;top:306.7px;" width="15" height="14" viewBox="0 0 15 14"><path d="M0.7 13.3 V4.3 H1.6 V0.7 H8.2 V4.3 H14.3 V13.3 Z" fill="#fdeeea" stroke="#c48c5c" stroke-width="1.3" stroke-linejoin="round"/><line x1="1.6" y1="4.3" x2="8.2" y2="4.3" stroke="#c48c5c" stroke-width="1.2"/></svg>
<div class="t" style="left:82.5px;top:310.54px;font-size:12px;line-height:12px;color:#545454;transform:scaleX(1.0109);">0 Bestuur, Politiek en Ondersteuning</div>
<svg style="position:absolute;left:47.5px;top:329.7px;" width="6" height="9" viewBox="0 0 6 9"><path d="M0.8 0.8 L4.5 4.5 L0.8 8.2" fill="none" stroke="#9a9a9a" stroke-width="1"/></svg>
<svg style="position:absolute;left:62px;top:324.7px;" width="15" height="14" viewBox="0 0 15 14"><path d="M0.7 13.3 V4.3 H1.6 V0.7 H8.2 V4.3 H14.3 V13.3 Z" fill="#fdeeea" stroke="#c48c5c" stroke-width="1.3" stroke-linejoin="round"/><line x1="1.6" y1="4.3" x2="8.2" y2="4.3" stroke="#c48c5c" stroke-width="1.2"/></svg>
<div class="t" style="left:82.0px;top:328.54px;font-size:12px;line-height:12px;color:#545454;transform:scaleX(1.0433);">1 Veiligheid en Vergunningen</div>
<svg style="position:absolute;left:47.5px;top:347.7px;" width="6" height="9" viewBox="0 0 6 9"><path d="M0.8 0.8 L4.5 4.5 L0.8 8.2" fill="none" stroke="#9a9a9a" stroke-width="1"/></svg>
<svg style="position:absolute;left:62px;top:342.7px;" width="15" height="14" viewBox="0 0 15 14"><path d="M0.7 13.3 V4.3 H1.6 V0.7 H8.2 V4.3 H14.3 V13.3 Z" fill="#fdeeea" stroke="#c48c5c" stroke-width="1.3" stroke-linejoin="round"/><line x1="1.6" y1="4.3" x2="8.2" y2="4.3" stroke="#c48c5c" stroke-width="1.2"/></svg>
<div class="t" style="left:82.5px;top:346.54px;font-size:12px;line-height:12px;color:#545454;transform:scaleX(0.9974);">2 Verkeer, Vervoer en Waterstaat</div>
<svg style="position:absolute;left:47.5px;top:365.7px;" width="6" height="9" viewBox="0 0 6 9"><path d="M0.8 0.8 L4.5 4.5 L0.8 8.2" fill="none" stroke="#9a9a9a" stroke-width="1"/></svg>
<svg style="position:absolute;left:62px;top:360.7px;" width="15" height="14" viewBox="0 0 15 14"><path d="M0.7 13.3 V4.3 H1.6 V0.7 H8.2 V4.3 H14.3 V13.3 Z" fill="#fdeeea" stroke="#c48c5c" stroke-width="1.3" stroke-linejoin="round"/><line x1="1.6" y1="4.3" x2="8.2" y2="4.3" stroke="#c48c5c" stroke-width="1.2"/></svg>
<div class="t" style="left:82.5px;top:364.54px;font-size:12px;line-height:12px;color:#545454;transform:scaleX(0.9920);">3 Economie</div>
<svg style="position:absolute;left:47.5px;top:383.7px;" width="6" height="9" viewBox="0 0 6 9"><path d="M0.8 0.8 L4.5 4.5 L0.8 8.2" fill="none" stroke="#9a9a9a" stroke-width="1"/></svg>
<svg style="position:absolute;left:62px;top:378.7px;" width="15" height="14" viewBox="0 0 15 14"><path d="M0.7 13.3 V4.3 H1.6 V0.7 H8.2 V4.3 H14.3 V13.3 Z" fill="#fdeeea" stroke="#c48c5c" stroke-width="1.3" stroke-linejoin="round"/><line x1="1.6" y1="4.3" x2="8.2" y2="4.3" stroke="#c48c5c" stroke-width="1.2"/></svg>
<div class="t" style="left:82.7px;top:382.54px;font-size:12px;line-height:12px;color:#545454;transform:scaleX(1.0040);">4 Onderwijs</div>
<svg style="position:absolute;left:47.5px;top:401.7px;" width="6" height="9" viewBox="0 0 6 9"><path d="M0.8 0.8 L4.5 4.5 L0.8 8.2" fill="none" stroke="#9a9a9a" stroke-width="1"/></svg>
<svg style="position:absolute;left:62px;top:396.7px;" width="15" height="14" viewBox="0 0 15 14"><path d="M0.7 13.3 V4.3 H1.6 V0.7 H8.2 V4.3 H14.3 V13.3 Z" fill="#fdeeea" stroke="#c48c5c" stroke-width="1.3" stroke-linejoin="round"/><line x1="1.6" y1="4.3" x2="8.2" y2="4.3" stroke="#c48c5c" stroke-width="1.2"/></svg>
<div class="t" style="left:82.5px;top:400.54px;font-size:12px;line-height:12px;color:#545454;transform:scaleX(0.9922);">5 Sport, Cultuur en Recreatie</div>
<svg style="position:absolute;left:47.5px;top:419.7px;" width="6" height="9" viewBox="0 0 6 9"><path d="M0.8 0.8 L4.5 4.5 L0.8 8.2" fill="none" stroke="#9a9a9a" stroke-width="1"/></svg>
<svg style="position:absolute;left:62px;top:414.7px;" width="15" height="14" viewBox="0 0 15 14"><path d="M0.7 13.3 V4.3 H1.6 V0.7 H8.2 V4.3 H14.3 V13.3 Z" fill="#fdeeea" stroke="#c48c5c" stroke-width="1.3" stroke-linejoin="round"/><line x1="1.6" y1="4.3" x2="8.2" y2="4.3" stroke="#c48c5c" stroke-width="1.2"/></svg>
<div class="t" style="left:82.5px;top:418.54px;font-size:12px;line-height:12px;color:#545454;transform:scaleX(0.9962);">6 Sociaal Domein</div>
<svg style="position:absolute;left:47.5px;top:437.7px;" width="6" height="9" viewBox="0 0 6 9"><path d="M0.8 0.8 L4.5 4.5 L0.8 8.2" fill="none" stroke="#9a9a9a" stroke-width="1"/></svg>
<svg style="position:absolute;left:62px;top:432.7px;" width="15" height="14" viewBox="0 0 15 14"><path d="M0.7 13.3 V4.3 H1.6 V0.7 H8.2 V4.3 H14.3 V13.3 Z" fill="#fdeeea" stroke="#c48c5c" stroke-width="1.3" stroke-linejoin="round"/><line x1="1.6" y1="4.3" x2="8.2" y2="4.3" stroke="#c48c5c" stroke-width="1.2"/></svg>
<div class="t" style="left:82.5px;top:436.54px;font-size:12px;line-height:12px;color:#545454;transform:scaleX(1.0335);">7 Volksgezondheid en Milieu</div>
<svg style="position:absolute;left:47.5px;top:455.7px;" width="6" height="9" viewBox="0 0 6 9"><path d="M0.8 0.8 L4.5 4.5 L0.8 8.2" fill="none" stroke="#9a9a9a" stroke-width="1"/></svg>
<svg style="position:absolute;left:62px;top:450.7px;" width="15" height="14" viewBox="0 0 15 14"><path d="M0.7 13.3 V4.3 H1.6 V0.7 H8.2 V4.3 H14.3 V13.3 Z" fill="#fdeeea" stroke="#c48c5c" stroke-width="1.3" stroke-linejoin="round"/><line x1="1.6" y1="4.3" x2="8.2" y2="4.3" stroke="#c48c5c" stroke-width="1.2"/></svg>
<div class="t" style="left:82.5px;top:454.54px;font-size:12px;line-height:12px;color:#545454;transform:scaleX(1.0120);">8 Volkshuisvesting, Leefomgeving en Stedelijke Vernieuwing</div>
<svg style="position:absolute;left:47.5px;top:473.7px;" width="6" height="9" viewBox="0 0 6 9"><path d="M0.8 0.8 L4.5 4.5 L0.8 8.2" fill="none" stroke="#9a9a9a" stroke-width="1"/></svg>
<svg style="position:absolute;left:62px;top:468.7px;" width="15" height="14" viewBox="0 0 15 14"><path d="M0.7 13.3 V4.3 H1.6 V0.7 H8.2 V4.3 H14.3 V13.3 Z" fill="#fdeeea" stroke="#c48c5c" stroke-width="1.3" stroke-linejoin="round"/><line x1="1.6" y1="4.3" x2="8.2" y2="4.3" stroke="#c48c5c" stroke-width="1.2"/></svg>
<div class="t" style="left:82.5px;top:472.54px;font-size:12px;line-height:12px;color:#545454;transform:scaleX(1.0081);">9 Interne Organisatie</div>
<svg style="position:absolute;left:47.5px;top:491.7px;" width="6" height="9" viewBox="0 0 6 9"><path d="M0.8 0.8 L4.5 4.5 L0.8 8.2" fill="none" stroke="#9a9a9a" stroke-width="1"/></svg>
<svg style="position:absolute;left:62px;top:486.7px;" width="15" height="14" viewBox="0 0 15 14"><path d="M0.7 13.3 V4.3 H1.6 V0.7 H8.2 V4.3 H14.3 V13.3 Z" fill="#fdeeea" stroke="#c48c5c" stroke-width="1.3" stroke-linejoin="round"/><line x1="1.6" y1="4.3" x2="8.2" y2="4.3" stroke="#c48c5c" stroke-width="1.2"/></svg>
<div class="t" style="left:82.0px;top:490.54px;font-size:12px;line-height:12px;color:#545454;transform:scaleX(1.0261);">10 Dienstverlening</div>
<svg style="position:absolute;left:47.5px;top:509.70000000000005px;" width="6" height="9" viewBox="0 0 6 9"><path d="M0.8 0.8 L4.5 4.5 L0.8 8.2" fill="none" stroke="#9a9a9a" stroke-width="1"/></svg>
<div style="position:absolute;left:59px;top:510.70000000000005px;width:3px;height:6px;background:#e02020;"></div>
<svg style="position:absolute;left:62px;top:504.70000000000005px;" width="15" height="14" viewBox="0 0 15 14"><path d="M0.7 13.3 V4.3 H1.6 V0.7 H8.2 V4.3 H14.3 V13.3 Z" fill="#fdeeea" stroke="#c48c5c" stroke-width="1.3" stroke-linejoin="round"/><line x1="1.6" y1="4.3" x2="8.2" y2="4.3" stroke="#c48c5c" stroke-width="1.2"/></svg>
<div class="t" style="left:82.5px;top:508.54px;font-size:12px;line-height:12px;color:#545454;transform:scaleX(0.9939);">99 Kern</div>
<svg style="position:absolute;left:27.5px;top:527.7px;" width="6" height="9" viewBox="0 0 6 9"><path d="M0.8 0.8 L4.5 4.5 L0.8 8.2" fill="none" stroke="#9a9a9a" stroke-width="1"/></svg>
<svg style="position:absolute;left:41px;top:524.2px;" width="17" height="14" viewBox="0 0 17 14"><rect x="0.8" y="0.8" width="15" height="11.6" fill="#fdf0ee" stroke="#c48c5c" stroke-width="1.5"/><rect x="4" y="4.5" width="8.5" height="5" fill="#f3b5ea"/><rect x="8.3" y="5.3" width="3.5" height="3.4" fill="#f7d0d0"/></svg>
<div class="t" style="left:63.0px;top:526.54px;font-size:12px;line-height:12px;color:#545454;transform:scaleX(1.0242);">Voorbeeld Componenten</div>
<svg style="position:absolute;left:27.5px;top:545.7px;" width="6" height="9" viewBox="0 0 6 9"><path d="M0.8 0.8 L4.5 4.5 L0.8 8.2" fill="none" stroke="#9a9a9a" stroke-width="1"/></svg>
<svg style="position:absolute;left:41px;top:542.2px;" width="17" height="14" viewBox="0 0 17 14"><rect x="0.8" y="0.8" width="15" height="11.6" fill="#fdf0ee" stroke="#c48c5c" stroke-width="1.5"/><rect x="4" y="4.5" width="8.5" height="5" fill="#f3b5ea"/><rect x="8.3" y="5.3" width="3.5" height="3.4" fill="#f7d0d0"/></svg>
<div class="t" style="left:63.0px;top:544.54px;font-size:12px;line-height:12px;color:#545454;transform:scaleX(0.9901);">Voorbeeld Generatie Relaties</div>
<svg style="position:absolute;left:536px;top:189px;" width="9" height="8" viewBox="0 0 9 8"><path d="M1 0.8 L8 7.5 M8 0.8 L1 7.5" stroke="#666" stroke-width="1.1"/></svg>
<div style="position:absolute;left:550px;top:176px;width:131px;height:419px;background:#e2e2e2;"></div>
<div style="position:absolute;left:551px;top:176px;width:129px;height:32px;background:#ebebeb;"></div>
<div class="t" style="left:555.0px;top:184.81px;font-size:17px;line-height:17px;color:#444444;transform:scaleX(1.0850);">Toolbox</div>
<svg style="position:absolute;left:627px;top:192px;" width="10" height="6" viewBox="0 0 10 6"><path d="M0.5 0.5 L9.5 0.5 L5 5.5 Z" fill="#666"/></svg>
<svg style="position:absolute;left:645px;top:187px;" width="10" height="11" viewBox="0 0 10 11"><path d="M2.5 0.5 H7.5 M3.5 0.5 V6 H6.5 V0.5 M1 6.5 H9 M5 6.5 V10.5" fill="none" stroke="#555" stroke-width="1.1"/></svg>
<svg style="position:absolute;left:663px;top:188px;" width="10" height="10" viewBox="0 0 10 10"><path d="M1 1 L9 9 M9 1 L1 9" stroke="#555" stroke-width="1.3"/></svg>
<div style="position:absolute;left:553px;top:208px;width:68px;height:23px;background:#ffffff;"></div>
<div style="position:absolute;left:621px;top:208px;width:56px;height:23px;background:#efefef;"></div>
<div class="t" style="left:558.7px;top:213.84px;font-size:12px;line-height:12px;color:#777;transform:scaleX(0.9034);">Search</div>
<svg style="position:absolute;left:603px;top:212px;" width="14" height="14" viewBox="0 0 14 14"><circle cx="8.5" cy="5.5" r="4" fill="none" stroke="#444" stroke-width="1.6"/><line x1="5.6" y1="8.4" x2="1.5" y2="12.5" stroke="#444" stroke-width="2"/></svg>
<svg style="position:absolute;left:626px;top:210px;" width="18" height="18" viewBox="0 0 18 18"><defs><radialGradient id="lg2" cx="0.4" cy="0.35" r="0.7"><stop offset="0" stop-color="#fff"/><stop offset="0.6" stop-color="#9cc6ea"/><stop offset="1" stop-color="#5a8fc6"/></radialGradient></defs><line x1="7" y1="11" x2="2" y2="16" stroke="#c8a070" stroke-width="2.6" stroke-linecap="round"/><circle cx="11" cy="7" r="5.5" fill="url(#lg2)" stroke="#6fa0d0" stroke-width="1"/></svg>
<svg style="position:absolute;left:655px;top:214px;" width="17" height="11" viewBox="0 0 17 11"><g fill="#6a6a6a"><rect x="0" y="0.3" width="17" height="1.7"/><rect x="0" y="4.6" width="17" height="1.7"/><rect x="0" y="8.9" width="17" height="1.7"/></g></svg>
<div style="position:absolute;left:553px;top:231px;width:124px;height:364px;background:#ffffff;"></div>
<div style="position:absolute;left:554px;top:234px;width:122px;height:16px;background:#d0d0d0;"></div>
<svg style="position:absolute;left:558px;top:237px;" width="7" height="10" viewBox="0 0 7 10"><path d="M0.7 0.7 L6 5 L0.7 9.3 Z" fill="none" stroke="#8a8a8a" stroke-width="1"/></svg>
<div class="t" style="left:569.3px;top:236.89px;font-size:11px;line-height:11px;color:#111;font-weight:bold;transform:scaleX(1.0116);">Common Elements</div>
<div style="position:absolute;left:554px;top:251px;width:122px;height:16px;background:#d0d0d0;"></div>
<svg style="position:absolute;left:558px;top:254px;" width="7" height="10" viewBox="0 0 7 10"><path d="M0.7 0.7 L6 5 L0.7 9.3 Z" fill="none" stroke="#8a8a8a" stroke-width="1"/></svg>
<div class="t" style="left:569.3px;top:253.89px;font-size:11px;line-height:11px;color:#111;font-weight:bold;transform:scaleX(1.0343);">Common Relation...</div>
<div style="position:absolute;left:554px;top:268px;width:122px;height:16px;background:#d0d0d0;"></div>
<svg style="position:absolute;left:558px;top:271px;" width="7" height="10" viewBox="0 0 7 10"><path d="M0.7 0.7 L6 5 L0.7 9.3 Z" fill="none" stroke="#8a8a8a" stroke-width="1"/></svg>
<div class="t" style="left:569.0px;top:270.89px;font-size:11px;line-height:11px;color:#111;font-weight:bold;transform:scaleX(1.0213);">Documents</div>
<div style="position:absolute;left:554px;top:285px;width:122px;height:16px;background:#d0d0d0;"></div>
<svg style="position:absolute;left:558px;top:288px;" width="7" height="10" viewBox="0 0 7 10"><path d="M0.7 0.7 L6 5 L0.7 9.3 Z" fill="none" stroke="#8a8a8a" stroke-width="1"/></svg>
<div class="t" style="left:569.3px;top:287.89px;font-size:11px;line-height:11px;color:#111;font-weight:bold;transform:scaleX(0.9960);">Governance</div>
<div style="position:absolute;left:554px;top:302px;width:122px;height:16px;background:#d0d0d0;"></div>
<svg style="position:absolute;left:558px;top:305px;" width="7" height="10" viewBox="0 0 7 10"><path d="M0.7 0.7 L6 5 L0.7 9.3 Z" fill="none" stroke="#8a8a8a" stroke-width="1"/></svg>
<div class="t" style="left:569.0px;top:304.89px;font-size:11px;line-height:11px;color:#111;font-weight:bold;transform:scaleX(1.0388);">Dynamic Viewpoi...</div>
<div style="position:absolute;left:554px;top:319px;width:122px;height:16px;background:#d0d0d0;"></div>
<svg style="position:absolute;left:558px;top:322px;" width="7" height="10" viewBox="0 0 7 10"><path d="M0.7 0.7 L6 5 L0.7 9.3 Z" fill="none" stroke="#8a8a8a" stroke-width="1"/></svg>
<div class="t" style="left:569.3px;top:321.89px;font-size:11px;line-height:11px;color:#111;font-weight:bold;transform:scaleX(1.0088);">Charts</div>
<div style="position:absolute;left:554px;top:336px;width:122px;height:16px;background:#d0d0d0;"></div>
<svg style="position:absolute;left:558px;top:339px;" width="7" height="10" viewBox="0 0 7 10"><path d="M0.7 0.7 L6 5 L0.7 9.3 Z" fill="none" stroke="#8a8a8a" stroke-width="1"/></svg>
<div class="t" style="left:569.5px;top:338.89px;font-size:11px;line-height:11px;color:#111;font-weight:bold;transform:scaleX(1.0588);">Simulation</div>
<div style="position:absolute;left:680px;top:176px;width:333px;height:419px;background:#f0f0f0;"></div>
<div style="position:absolute;left:680px;top:177px;width:333px;height:1px;background:#d8d8d8;"></div>
<div style="position:absolute;left:680px;top:177px;width:1px;height:418px;background:#d0d0d0;"></div>
<div style="position:absolute;left:681px;top:178px;width:332px;height:27px;background:#e6e6e6;"></div>
<svg style="position:absolute;left:685px;top:185px;" width="12" height="10" viewBox="0 0 12 10"><path d="M5.5 1 L1.5 5 L5.5 9 M10.5 1 L6.5 5 L10.5 9" fill="none" stroke="#555" stroke-width="1.2"/></svg>
<div style="position:absolute;left:681px;top:205px;width:332px;height:25px;background:#e6e6e6;"></div>
<div style="position:absolute;left:817px;top:204px;width:196px;height:1px;background:#d6d6d6;"></div>
<div style="position:absolute;left:681px;top:205px;width:136px;height:25px;background:#fbfbfb;"></div>
<div style="position:absolute;left:817px;top:205px;width:1px;height:25px;background:#d2d2d2;"></div>
<svg style="position:absolute;left:683px;top:208px;" width="19" height="19" viewBox="0 0 19 19"><circle cx="9.6" cy="9.5" r="7.2" fill="none" stroke="#3c3ff0" stroke-width="1.8"/><circle cx="15.66" cy="6.00" r="1.7" fill="#3c3ff0"/><circle cx="13.10" cy="15.56" r="1.7" fill="#3c3ff0"/><circle cx="3.54" cy="13.00" r="1.7" fill="#3c3ff0"/><circle cx="6.10" cy="3.44" r="1.7" fill="#3c3ff0"/><ellipse cx="10.35" cy="6.70" rx="2.1" ry="1.75" transform="rotate(-75 10.35 6.70)" fill="#3c3ff0"/><ellipse cx="12.40" cy="10.25" rx="2.1" ry="1.75" transform="rotate(15 12.40 10.25)" fill="#3c3ff0"/><ellipse cx="8.85" cy="12.30" rx="2.1" ry="1.75" transform="rotate(105 8.85 12.30)" fill="#3c3ff0"/><ellipse cx="6.80" cy="8.75" rx="2.1" ry="1.75" transform="rotate(195 6.80 8.75)" fill="#3c3ff0"/></svg>
<div class="t" style="left:702.5px;top:210.61px;font-size:17px;line-height:17px;color:#444444;transform:scaleX(1.0375);">Start Page</div>
<svg style="position:absolute;left:801px;top:213.5px;" width="9" height="9" viewBox="0 0 9 9"><path d="M0.8 0.8 L7.8 7.8 M7.8 0.8 L0.8 7.8" stroke="#555" stroke-width="1.15"/></svg>
<div class="t" style="left:686.2px;top:233.84px;font-size:12px;line-height:12px;color:#4a6f96;transform:scaleX(0.9496);">Open Project</div>
<div class="t" style="left:765.2px;top:233.84px;font-size:12px;line-height:12px;color:#525252;transform:scaleX(0.9458);">Create from Pattern</div>
<div class="t" style="left:878.3px;top:233.84px;font-size:12px;line-height:12px;color:#525252;transform:scaleX(0.9733);">Add Diagram</div>
<div class="t" style="left:958.5px;top:233.84px;font-size:12px;line-height:12px;color:#525252;transform:scaleX(0.9446);">Guidance</div>
<svg style="position:absolute;left:681px;top:249px;" width="332" height="10" viewBox="0 0 332 10"><path d="M0 8.5 H31 L38 1.5 L45 8.5 H332" fill="none" stroke="#cfcfcf" stroke-width="1"/></svg>
<div class="t" style="left:755.2px;top:336.44px;font-size:27px;line-height:27px;color:#4a7aa8;transform:scaleX(0.9952);">Open</div>
<div class="t" style="left:771.3px;top:385.45px;font-size:14px;line-height:14px;color:#4f80ae;transform:scaleX(0.9887);">Personal Project</div>
<div class="t" style="left:771.6px;top:409.55px;font-size:14px;line-height:14px;color:#797979;transform:scaleX(0.9261);">Open File</div>
<div class="t" style="left:771.6px;top:433.95px;font-size:14px;line-height:14px;color:#797979;transform:scaleX(0.9256);">Create New</div>
<div class="t" style="left:772.4px;top:490.35px;font-size:14px;line-height:14px;color:#4f80ae;transform:scaleX(0.9967);">Team Repository</div>
<div class="t" style="left:771.9px;top:514.15px;font-size:14px;line-height:14px;color:#797979;transform:scaleX(0.9640);">Cloud Connection</div>
<div class="t" style="left:771.9px;top:533.95px;font-size:14px;line-height:14px;color:#797979;transform:scaleX(0.9313);">Server Connection</div>
<div class="t" style="left:771.9px;top:554.15px;font-size:14px;line-height:14px;color:#797979;transform:scaleX(0.9235);">Custom Data Source</div>
<div class="t" style="left:771.7px;top:574.55px;font-size:14px;line-height:14px;color:#797979;transform:scaleX(0.8528);">URL</div>
<div style="position:absolute;left:384px;top:128px;width:158px;height:116px;background:#fdfdfd;border:1px solid #c4c4c4;box-sizing:border-box;box-shadow:1px 1px 1px rgba(0,0,0,0.28), 0 2px 12px rgba(0,0,0,0.16);"></div>
<div style="position:absolute;left:385px;top:129px;width:156px;height:19px;background:#e8e8e8;"></div>
<div class="t" style="left:386.7px;top:134.07px;font-size:11.5px;line-height:11.5px;color:#333;font-weight:bold;transform:scaleX(0.9640);">Transform</div>
<div class="t" style="left:414.3px;top:155.27px;font-size:11.5px;line-height:11.5px;color:#444444;transform:scaleX(0.9928);">Apply Transformation...</div>
<div class="t" style="left:414.6px;top:177.27px;font-size:11.5px;line-height:11.5px;color:#b4b4b4;transform:scaleX(0.9589);">Transform Selection...</div>
<div class="t" style="left:414.6px;top:199.97px;font-size:11.5px;line-height:11.5px;color:#444444;transform:scaleX(0.9761);">Transform Templates</div>
<div style="position:absolute;left:413px;top:217px;width:128px;height:1px;background:#e2e2e2;"></div>
<div class="t" style="left:414.3px;top:226.47px;font-size:11.5px;line-height:11.5px;color:#444444;transform:scaleX(0.9792);">Help...</div>
<svg style="position:absolute;left:0px;top:0px;pointer-events:none" width="1013" height="595" viewBox="0 0 1013 595"><line x1="538" y1="225.5" x2="750.5" y2="291.5" stroke="#f42a18" stroke-width="5.8"/><path d="M517.5 218.2 L544.4 213.4 L536.8 237.1 Z" fill="#f42a18"/></svg>
</body></html>
